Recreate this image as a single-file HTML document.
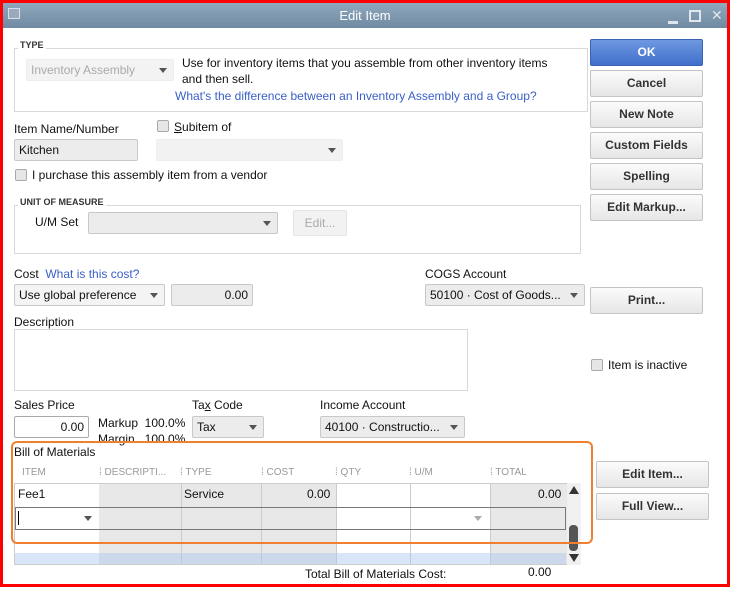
<!DOCTYPE html>
<html><head><style>
*{margin:0;padding:0;box-sizing:border-box}
body{width:732px;height:590px;background:#fff;font-family:"Liberation Sans",sans-serif;font-size:12px;color:#111;position:relative;overflow:hidden}
.a{position:absolute}
.frame{left:0;top:0;width:730px;height:587px;border:3px solid #f00}
.tb{left:3px;top:3px;width:724px;height:25px;background:linear-gradient(#8fa8bd,#6f8aa2);color:#fff;font-size:13px;text-align:center;line-height:25px}
.btn{position:absolute;width:113px;height:27px;border:1px solid #c4c4c4;border-radius:2px;background:linear-gradient(#fbfbfb,#e6e6e6);font-weight:bold;font-size:12px;color:#333;text-align:center;line-height:25px}
.box{position:absolute;border:1px solid #d8d8d8}
.fld{position:absolute;height:22px;border:1px solid #c8c8c8;border-radius:2px;background:#ececec;line-height:20px;padding:0 4px}
.dd::after{content:"";position:absolute;right:6px;top:8px;border:4px solid transparent;border-top:5px solid #555}
.cb{position:absolute;width:12px;height:12px;border:1px solid #aaa;border-radius:2px;background:#e6e6e6}
.lnk{color:#3b5fc7}
.lab{position:absolute;white-space:nowrap}
.cap{font-size:9px;font-weight:bold;color:#333;background:#fff;padding:0 2px}
.hd{position:absolute;top:467px;font-size:10px;color:#999}
</style></head><body>
<div class="a frame"></div>
<div class="a tb">Edit Item</div>
<div class="a" style="left:8px;top:8px;width:12px;height:11px;border:1px solid #dde;background:#9ab"></div>
<div class="a" style="left:668px;top:21px;width:10px;height:3px;background:#dfe6ee"></div>
<div class="a" style="left:689px;top:10px;width:12px;height:12px;border:2px solid #dfe6ee"></div>
<div class="a" style="left:711px;top:7px;color:#dfe6ee;font-size:14px">✕</div>

<div class="box" style="left:14px;top:48px;width:574px;height:64px"></div>
<div class="lab cap" style="left:18px;top:40px">TYPE</div>
<div class="fld dd" style="left:26px;top:59px;width:148px;background:#f3f3f3;color:#aaa;border-color:#eee">Inventory Assembly</div>
<div class="lab" style="left:182px;top:56px">Use for inventory items that you assemble from other inventory items</div>
<div class="lab" style="left:182px;top:72px">and then sell.</div>
<div class="lab lnk" style="left:175px;top:89px">What's the difference between an Inventory Assembly and a Group?</div>

<div class="btn" style="left:590px;top:39px;background:linear-gradient(#6f98e0,#3f6fcc);color:#fff;border-color:#3a62b5">OK</div>
<div class="btn" style="left:590px;top:70px">Cancel</div>
<div class="btn" style="left:590px;top:101px">New Note</div>
<div class="btn" style="left:590px;top:132px">Custom Fields</div>
<div class="btn" style="left:590px;top:163px">Spelling</div>
<div class="btn" style="left:590px;top:194px">Edit Markup...</div>
<div class="btn" style="left:590px;top:287px">Print...</div>
<div class="cb" style="left:591px;top:359px"></div>
<div class="lab" style="left:608px;top:358px">Item is inactive</div>

<div class="lab" style="left:14px;top:122px">Item Name/Number</div>
<div class="cb" style="left:157px;top:120px"></div>
<div class="lab" style="left:174px;top:120px"><u>S</u>ubitem of</div>
<div class="fld" style="left:14px;top:139px;width:124px">Kitchen</div>
<div class="fld dd" style="left:156px;top:139px;width:187px;background:#f2f2f2;border-color:#eee"></div>
<div class="cb" style="left:15px;top:169px"></div>
<div class="lab" style="left:32px;top:168px">I purchase this assembly item from a vendor</div>

<div class="box" style="left:14px;top:205px;width:567px;height:49px"></div>
<div class="lab cap" style="left:18px;top:197px">UNIT OF MEASURE</div>
<div class="lab" style="left:35px;top:215px">U/M Set</div>
<div class="fld dd" style="left:88px;top:212px;width:190px"></div>
<div class="fld" style="left:293px;top:210px;width:54px;height:26px;background:#f2f2f2;color:#aaa;border-color:#e4e4e4;line-height:24px;text-align:center">Edit...</div>

<div class="lab" style="left:14px;top:267px">Cost <span class="lnk">&nbsp;What is this cost?</span></div>
<div class="fld dd" style="left:14px;top:284px;width:151px;background:#f4f4f4">Use global preference</div>
<div class="fld" style="left:171px;top:284px;width:82px;text-align:right">0.00</div>
<div class="lab" style="left:425px;top:267px">COGS Account</div>
<div class="fld dd" style="left:425px;top:284px;width:160px">50100 · Cost of Goods...</div>

<div class="lab" style="left:14px;top:315px">Description</div>
<div class="box" style="left:14px;top:329px;width:454px;height:62px"></div>

<div class="lab" style="left:14px;top:398px">Sales Price</div>
<div class="fld" style="left:14px;top:416px;width:75px;background:#fff;border-color:#aaa;text-align:right">0.00</div>
<div class="lab" style="left:98px;top:416px">Markup &nbsp;100.0%</div>
<div class="lab" style="left:98px;top:432px">Margin &nbsp;&nbsp;100.0%</div>
<div class="lab" style="left:192px;top:398px">Ta<u>x</u> Code</div>
<div class="fld dd" style="left:192px;top:416px;width:72px">Tax</div>
<div class="lab" style="left:320px;top:398px">Income Account</div>
<div class="fld dd" style="left:320px;top:416px;width:145px">40100 · Constructio...</div>

<div class="lab" style="left:14px;top:445px">Bill of Materials</div>
<div class="hd" style="left:22px">ITEM</div>
<div class="hd" style="left:99px">⁞ DESCRIPTI...</div>
<div class="hd" style="left:180px">⁞ TYPE</div>
<div class="hd" style="left:261px">⁞ COST</div>
<div class="hd" style="left:335px">⁞ QTY</div>
<div class="hd" style="left:409px">⁞ U/M</div>
<div class="hd" style="left:490px">⁞ TOTAL</div>

<div class="a" style="left:14px;top:483px;width:553px;height:82px;border:1px solid #ccc;background:#fff"></div>
<div class="a" style="left:99px;top:484px;width:82px;height:80px;background:#e8e8e8"></div>
<div class="a" style="left:181px;top:484px;width:80px;height:80px;background:#e8e8e8;border-left:1px solid #ccc"></div>
<div class="a" style="left:261px;top:484px;width:75px;height:80px;background:#e8e8e8;border-left:1px solid #ccc"></div>
<div class="a" style="left:336px;top:484px;width:74px;height:80px;border-left:1px solid #ccc"></div>
<div class="a" style="left:410px;top:484px;width:80px;height:80px;border-left:1px solid #ccc"></div>
<div class="a" style="left:490px;top:484px;width:77px;height:80px;background:#e8e8e8;border-left:1px solid #ccc"></div>
<div class="a" style="left:15px;top:553px;width:551px;height:11px;background:rgba(170,200,240,.45)"></div>
<div class="a" style="left:15px;top:507px;width:551px;height:23px;border:1px solid #777"></div>
<div class="lab" style="left:18px;top:487px">Fee1</div>
<div class="lab" style="left:184px;top:487px">Service</div>
<div class="lab" style="left:307px;top:487px">0.00</div>
<div class="lab" style="left:538px;top:487px">0.00</div>
<div class="a" style="left:18px;top:511px;width:1px;height:14px;background:#000"></div>
<div class="a" style="left:84px;top:516px;border:4px solid transparent;border-top:5px solid #555"></div>
<div class="a" style="left:474px;top:516px;border:4px solid transparent;border-top:5px solid #aaa"></div>
<div class="a" style="left:567px;top:483px;width:14px;height:82px;background:#f0f0f0"></div>
<div class="a" style="left:569px;top:486px;border:5px solid transparent;border-bottom:8px solid #333;border-top:0"></div>
<div class="a" style="left:569px;top:525px;width:9px;height:26px;border-radius:4px;background:#555"></div>
<div class="a" style="left:569px;top:554px;border:5px solid transparent;border-top:8px solid #333;border-bottom:0"></div>

<div class="a" style="left:11px;top:441px;width:582px;height:103px;border:2px solid #f08030;border-radius:6px"></div>

<div class="btn" style="left:596px;top:461px">Edit Item...</div>
<div class="btn" style="left:596px;top:493px">Full View...</div>

<div class="lab" style="left:305px;top:567px">Total Bill of Materials Cost:</div>
<div class="lab" style="left:528px;top:565px">0.00</div>
</body></html>
